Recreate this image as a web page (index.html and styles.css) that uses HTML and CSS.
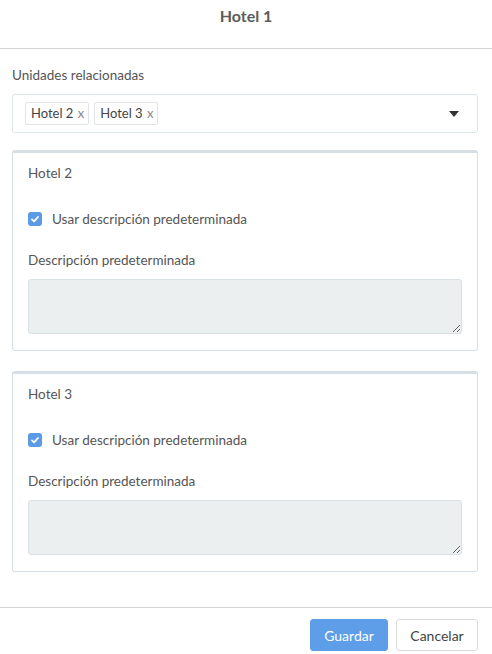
FILE: index.html
```html
<!DOCTYPE html>
<html lang="es">
<head>
  <meta charset="UTF-8">
  <meta name="viewport" content="width=device-width, initial-scale=1.0">
  <title>Hotel 1</title>
  <link rel="stylesheet" href="styles.css">
</head>
<body>
  <header class="modal-header">
    <h1>Hotel 1</h1>
  </header>

  <main class="modal-body">
    <label class="field-label">Unidades relacionadas</label>
    <div class="select">
      <div class="tags">
        <span class="tag">Hotel 2 <span class="tag-x">x</span></span>
        <span class="tag">Hotel 3 <span class="tag-x">x</span></span>
      </div>
      <span class="caret"></span>
    </div>

    <section class="panel">
      <div class="panel-title">Hotel 2</div>
      <label class="check">
        <span class="box">
          <svg width="10" height="10" viewBox="0 0 10 10"><path d="M2 5.4 L4.1 7.4 L8 3" fill="none" stroke="#fff" stroke-width="1.8" stroke-linecap="round" stroke-linejoin="round"/></svg>
        </span>
        Usar descripción predeterminada
      </label>
      <div class="field-label">Descripción predeterminada</div>
      <textarea class="desc" disabled></textarea>
    </section>

    <section class="panel">
      <div class="panel-title">Hotel 3</div>
      <label class="check">
        <span class="box">
          <svg width="10" height="10" viewBox="0 0 10 10"><path d="M2 5.4 L4.1 7.4 L8 3" fill="none" stroke="#fff" stroke-width="1.8" stroke-linecap="round" stroke-linejoin="round"/></svg>
        </span>
        Usar descripción predeterminada
      </label>
      <div class="field-label">Descripción predeterminada</div>
      <textarea class="desc" disabled></textarea>
    </section>
  </main>

  <footer class="modal-footer">
    <button class="btn btn-primary">Guardar</button>
    <button class="btn btn-default">Cancelar</button>
  </footer>
</body>
</html>
```

FILE: styles.css
```css
body {
  margin: 0;
  font-family: Lato, "Open Sans", sans-serif;
  font-size: 13.5px;
  color: #555;
  background: #fff;
}

.modal-header {
  height: 49px;
  box-sizing: border-box;
  padding-top: 6px;
  border-bottom: 1px solid #d4d4d4;
  text-align: center;
}
.modal-header h1 {
  margin: 0;
  font-size: 16px;
  line-height: 20px;
  font-weight: bold;
  color: #5c5c5c;
}

.modal-body {
  padding: 17px 14px 35px 12px;
}

.field-label {
  display: block;
  line-height: 18px;
  color: #555;
}

.select {
  margin-top: 10px;
  height: 39px;
  box-sizing: border-box;
  border: 1px solid #dfe6ea;
  border-radius: 3px;
  padding: 0 18px 0 12px;
  display: flex;
  align-items: center;
  justify-content: space-between;
}
.tags {
  display: flex;
  gap: 5px;
}
.tag {
  height: 23px;
  box-sizing: border-box;
  border: 1px solid #e1e5e8;
  border-radius: 2px;
  padding: 0 4px 0 5px;
  font-size: 13px;
  line-height: 21px;
  color: #444;
}
.tag-x {
  color: #888;
  margin-left: 1px;
}
.caret {
  width: 0;
  height: 0;
  border-left: 5px solid transparent;
  border-right: 5px solid transparent;
  border-top: 6px solid #333;
}

.panel {
  margin-top: 17px;
  border: 1px solid #d6dfe5;
  border-top-width: 3px;
  border-radius: 3px;
  padding: 11px 15px 16px;
}
.panel + .panel {
  margin-top: 20px;
}
.panel-title {
  line-height: 18px;
}

.check {
  margin-top: 28px;
  display: flex;
  align-items: center;
  gap: 10px;
  line-height: 18px;
  color: #555;
}
.box {
  width: 14px;
  height: 14px;
  border-radius: 3px;
  background: #5b9be6;
  display: flex;
  align-items: center;
  justify-content: center;
}
.check + .field-label {
  margin-top: 23px;
}

.desc {
  display: block;
  margin-top: 10px;
  width: 100%;
  height: 55px;
  box-sizing: border-box;
  background: #ebeff0;
  border: 1px solid #d9e1e5;
  border-radius: 3px;
  resize: vertical;
}

.modal-footer {
  border-top: 1px solid #d4d4d4;
  padding: 11px 14px 0 12px;
  display: flex;
  justify-content: flex-end;
  gap: 8px;
}
.btn {
  height: 32px;
  box-sizing: border-box;
  border-radius: 3px;
  font-family: inherit;
  font-size: 14px;
  cursor: pointer;
}
.btn-primary {
  width: 78px;
  background: #5e9de8;
  border: 1px solid #5e9de8;
  color: #fff;
}
.btn-default {
  width: 82px;
  background: #fff;
  border: 1px solid #dcdcdc;
  color: #444;
}
```
